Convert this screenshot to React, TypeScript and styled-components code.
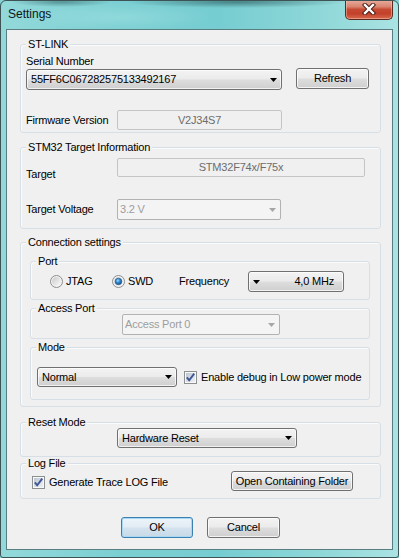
import React, { useId } from 'react'
import styled, { createGlobalStyle, css } from 'styled-components'

const GlobalStyle = createGlobalStyle`
  html, body {
    margin: 0;
    padding: 0;
    background: #86d3d5;
  }
  body {
    font-family: 'Liberation Sans', Arial, sans-serif;
    font-size: 11px;
    letter-spacing: -0.2px;
    color: #000;
  }
  * { box-sizing: border-box; }
`

const Window = styled.div`
  width: 399px;
  height: 558px;
  border: 1px solid #3d5356;
  border-radius: 6px 6px 3px 3px;
  display: flex;
  flex-direction: column;
  overflow: hidden;
  background:
    radial-gradient(ellipse 110px 6px at 235px 1px, rgba(30, 70, 72, 0.55), transparent),
    radial-gradient(ellipse 50px 5px at 60px 1px, rgba(30, 70, 72, 0.45), transparent),
    radial-gradient(ellipse 90px 14px at 120px 16px, rgba(180, 235, 235, 0.35), transparent),
    linear-gradient(90deg, #93d9da 0%, #7bcfd2 30%, #76cdd1 55%, #8ed7d8 80%, #abe3e3 100%);
`

const TitleBar = styled.div`
  height: 28px;
  display: flex;
  align-items: flex-start;
  padding-left: 7px;
`

const Title = styled.div`
  margin-top: 6px;
  font-size: 12px;
  line-height: 14px;
  letter-spacing: 0;
  color: #0d1620;
`

const CloseButton = styled.div`
  margin-left: auto;
  margin-right: 5px;
  margin-top: -1px;
  width: 48px;
  height: 20px;
  border: 1px solid #5b2b22;
  border-top: none;
  border-radius: 0 0 5px 5px;
  display: flex;
  align-items: center;
  justify-content: center;
  padding-bottom: 1px;
  background: linear-gradient(180deg, #e9ad9e 0%, #d88470 35%, #c64a33 50%, #c2412a 72%, #d7694c 100%);
  box-shadow: inset 0 0 0 1px rgba(255, 210, 200, 0.45);
`

const ClientWrap = styled.div`
  flex: 1;
  display: flex;
  padding: 0 5px 7px 5px;
`

const Client = styled.div`
  flex: 1;
  display: flex;
  flex-direction: column;
  border: 1px solid #587e82;
  background: #f0f0f0;
  padding: 0 11px 0 13px;
`

const Group = styled.div<{ $top: number; $pad: string }>`
  position: relative;
  display: flex;
  flex-direction: column;
  margin-top: ${p => p.$top}px;
  padding: ${p => p.$pad};
  border: 1px solid #d5dfe5;
  border-radius: 3px;
  box-shadow: inset 1px 1px 0 #fbfbfb;
`

const Caption = styled.span`
  position: absolute;
  top: -7px;
  left: 5px;
  padding: 0 2px;
  line-height: 13px;
  background: #f0f0f0;
  white-space: nowrap;
`

const Label = styled.div<{ $w?: number; $top?: number }>`
  line-height: 13px;
  white-space: nowrap;
  ${p => p.$w && css`width: ${p.$w}px; flex-shrink: 0;`}
  ${p => p.$top && css`margin-top: ${p.$top}px;`}
`

const Row = styled.div<{ $top?: number; $align?: string; $left?: number }>`
  display: flex;
  align-items: ${p => p.$align ?? 'center'};
  margin-top: ${p => p.$top ?? 0}px;
  padding-left: ${p => p.$left ?? 0}px;
`

const PortRow = styled.div`
  display: grid;
  grid-template-columns: 62px 67px 69px 96px;
  align-items: center;
  padding-left: 19px;
`

const Combo = styled.div<{ $w: number; $h?: number; $disabled?: boolean; $top?: number; $left?: number }>`
  width: ${p => p.$w}px;
  height: ${p => p.$h ?? 21}px;
  flex-shrink: 0;
  display: flex;
  align-items: center;
  margin-top: ${p => p.$top ?? 0}px;
  margin-left: ${p => p.$left ?? 0}px;
  padding: 0 4px 0 4px;
  border: 1px solid #707070;
  border-radius: 3px;
  background: linear-gradient(180deg, #f3f3f3 0%, #ebebeb 48%, #dddddd 52%, #cfcfcf 100%);
  box-shadow: inset 0 0 0 1px rgba(255, 255, 255, 0.7);
  color: #000;
  ${p => p.$disabled && css`
    border-color: #b2b2b2;
    border-radius: 2px;
    background: #f4f4f4;
    box-shadow: none;
    color: #9d9d9d;
    padding-left: 2px;
  `}
`

const ComboText = styled.span`
  flex: 1;
  line-height: 13px;
  white-space: nowrap;
  overflow: hidden;
`

const ReadOnlyBox = styled.div<{ $w: number; $h: number }>`
  width: ${p => p.$w}px;
  height: ${p => p.$h}px;
  flex-shrink: 0;
  display: flex;
  align-items: center;
  justify-content: center;
  border: 1px solid #c5c5c5;
  border-radius: 2px;
  background: #f0f0f0;
  color: #6d6d6d;
  line-height: 13px;
`

const Button = styled.div<{ $w: number; $h?: number; $default?: boolean; $top?: number; $left?: number }>`
  width: ${p => p.$w}px;
  height: ${p => p.$h ?? 21}px;
  flex-shrink: 0;
  display: flex;
  align-items: center;
  justify-content: center;
  margin-top: ${p => p.$top ?? 0}px;
  margin-left: ${p => p.$left ?? 0}px;
  border: 1px solid #707070;
  border-radius: 3px;
  background: linear-gradient(180deg, #f3f3f3 0%, #ebebeb 48%, #dddddd 52%, #cfcfcf 100%);
  box-shadow: inset 0 0 0 1px rgba(255, 255, 255, 0.75);
  line-height: 13px;
  white-space: nowrap;
  ${p => p.$default && css`
    border-color: #3c7fb1;
    background: linear-gradient(180deg, #edf4fa 0%, #e2ecf4 48%, #d3e2ee 52%, #c8d9e7 100%);
    box-shadow: inset 0 0 0 1px #a9d8f4;
  `}
`

const FreqButton = styled(Button)`
  justify-content: space-between;
  padding: 0 9px 0 4px;
`

const CheckLabel = styled.div<{ $gap?: number; $left?: number; $top?: number }>`
  display: flex;
  align-items: center;
  gap: ${p => p.$gap ?? 4}px;
  margin-left: ${p => p.$left ?? 0}px;
  margin-top: ${p => p.$top ?? 0}px;
  line-height: 13px;
  white-space: nowrap;
  svg { flex-shrink: 0; }
`

const ButtonBar = styled.div`
  display: flex;
  gap: 14px;
  margin-top: 18px;
  padding-left: 101px;
`

function Arrow({ color = '#000' }: { color?: string }) {
  return (
    <svg width="7" height="4" viewBox="0 0 7 4">
      <path d="M0 0 H7 L3.5 4 Z" fill={color} />
    </svg>
  )
}

function ComboBox({
  value,
  w,
  h,
  disabled,
  top,
  left,
}: {
  value: string
  w: number
  h?: number
  disabled?: boolean
  top?: number
  left?: number
}) {
  return (
    <Combo $w={w} $h={h} $disabled={disabled} $top={top} $left={left}>
      <ComboText>{value}</ComboText>
      <Arrow color={disabled ? '#a6a6a6' : '#000'} />
    </Combo>
  )
}

function Radio({ checked }: { checked?: boolean }) {
  const id = useId().replace(/:/g, '')
  return (
    <svg width="13" height="13" viewBox="0 0 13 13">
      <defs>
        <linearGradient id={`rg${id}`} x1="0" y1="0" x2="1" y2="1">
          <stop offset="0" stopColor="#c9c9c9" />
          <stop offset="1" stopColor="#fbfbfb" />
        </linearGradient>
        <radialGradient id={`rd${id}`} cx="0.4" cy="0.35" r="0.7">
          <stop offset="0" stopColor="#9fdcff" />
          <stop offset="0.45" stopColor="#2f88d0" />
          <stop offset="1" stopColor="#164f86" />
        </radialGradient>
      </defs>
      <circle cx="6.5" cy="6.5" r="6" fill="#f4f4f4" stroke="#8a8c8e" />
      <circle cx="6.5" cy="6.5" r="4.5" fill={`url(#rg${id})`} />
      {checked && <circle cx="6.5" cy="6.5" r="3.3" fill={`url(#rd${id})`} stroke="#1d4f7c" strokeWidth="0.6" />}
    </svg>
  )
}

function Checkbox() {
  const id = useId().replace(/:/g, '')
  return (
    <svg width="13" height="13" viewBox="0 0 13 13">
      <defs>
        <linearGradient id={`cb${id}`} x1="0" y1="0" x2="1" y2="1">
          <stop offset="0" stopColor="#bcc5d2" />
          <stop offset="1" stopColor="#eef1f5" />
        </linearGradient>
      </defs>
      <rect x="0.5" y="0.5" width="12" height="12" fill="#f7f8fa" stroke="#8e8f8f" />
      <rect x="2" y="2" width="9" height="9" fill={`url(#cb${id})`} />
      <path d="M2.8 6.3 L5.2 9.2 L10.2 2.6" fill="none" stroke="#3e5693" strokeWidth="1.9" />
    </svg>
  )
}

function CloseGlyph() {
  return (
    <svg width="14" height="12" viewBox="0 0 14 12">
      <path d="M3 2 L11 10 M11 2 L3 10" stroke="#4a1d15" strokeWidth="4.4" strokeLinecap="square" />
      <path d="M3 2 L11 10 M11 2 L3 10" stroke="#ffffff" strokeWidth="2.4" strokeLinecap="square" />
    </svg>
  )
}

export default function App() {
  return (
    <>
      <GlobalStyle />
      <Window>
        <TitleBar>
          <Title>Settings</Title>
          <CloseButton>
            <CloseGlyph />
          </CloseButton>
        </TitleBar>
        <ClientWrap>
          <Client>
            <Group $top={14} $pad="10px 0 2px 5px">
              <Caption>ST-LINK</Caption>
              <Label>Serial Number</Label>
              <Row $align="flex-start">
                <ComboBox value="55FF6C067282575133492167" w={256} top={1} />
                <Button $w={73} $left={14}>Refresh</Button>
              </Row>
              <Row $top={20}>
                <Label $w={91}>Firmware Version</Label>
                <ReadOnlyBox $w={165} $h={20}>V2J34S7</ReadOnlyBox>
              </Row>
            </Group>

            <Group $top={14} $pad="10px 0 8px 5px">
              <Caption>STM32 Target Information</Caption>
              <Row $align="flex-start">
                <Label $w={91} $top={10}>Target</Label>
                <ReadOnlyBox $w={248} $h={19}>STM32F74x/F75x</ReadOnlyBox>
              </Row>
              <Row $top={18}>
                <Label $w={91}>Target Voltage</Label>
                <ComboBox value="3.2 V" w={164} disabled />
              </Row>
            </Group>

            <Group $top={13} $pad="18px 10px 6px 9px">
              <Caption>Connection settings</Caption>
              <Group $top={0} $pad="9px 0 7px 0">
                <Caption>Port</Caption>
                <PortRow>
                  <CheckLabel $gap={3}>
                    <Radio />
                    JTAG
                  </CheckLabel>
                  <CheckLabel $gap={3}>
                    <Radio checked />
                    SWD
                  </CheckLabel>
                  <Label>Frequency</Label>
                  <FreqButton $w={96}>
                    <Arrow />
                    <span>4,0 MHz</span>
                  </FreqButton>
                </PortRow>
              </Group>
              <Group $top={8} $pad="5px 0 3px 0">
                <Caption>Access Port</Caption>
                <ComboBox value="Access Port 0" w={158} left={91} disabled />
              </Group>
              <Group $top={8} $pad="19px 0 12px 6px">
                <Caption>Mode</Caption>
                <Row>
                  <ComboBox value="Normal" w={140} h={20} />
                  <CheckLabel $left={7}>
                    <Checkbox />
                    Enable debug in Low power mode
                  </CheckLabel>
                </Row>
              </Group>
            </Group>

            <Group $top={15} $pad="5px 0 8px 96px">
              <Caption>Reset Mode</Caption>
              <ComboBox value="Hardware Reset" w={180} h={20} />
            </Group>

            <Group $top={6} $pad="7px 27px 7px 11px">
              <Caption>Log File</Caption>
              <Row>
                <CheckLabel $top={3}>
                  <Checkbox />
                  Generate Trace LOG File
                </CheckLabel>
                <Button $w={122} $h={20} style={{ marginLeft: 'auto' }}>
                  Open Containing Folder
                </Button>
              </Row>
            </Group>

            <ButtonBar>
              <Button $w={72} $default>OK</Button>
              <Button $w={73}>Cancel</Button>
            </ButtonBar>
          </Client>
        </ClientWrap>
      </Window>
    </>
  )
}
